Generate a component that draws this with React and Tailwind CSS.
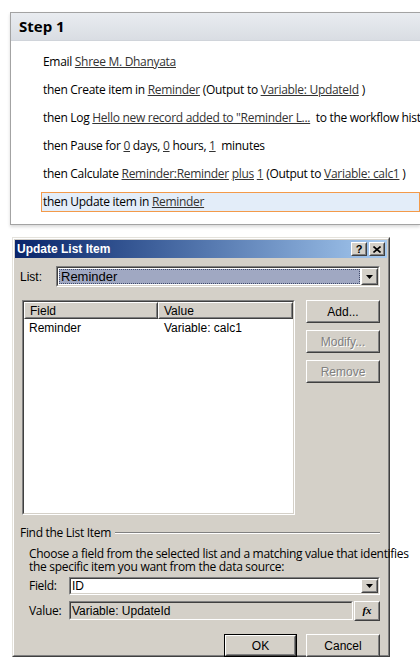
import React from "react";

const ui = { fontFamily: '"Open Sans", "Noto Sans", sans-serif' };
const classic = { fontFamily: '"Liberation Sans", Arial, sans-serif' };

function L({ children }) {
  return <span className="underline text-[#333]">{children}</span>;
}

function Row({ children, active }) {
  return (
    <div
      className={
        "h-[20px] ml-[30px] pl-[1px] flex items-center whitespace-nowrap border " +
        (active ? "border-[#f39a4a] bg-[#e3edf9]" : "border-transparent")
      }
    >
      {children}
    </div>
  );
}

function Raised({ children, className = "" }) {
  return (
    <div className={"border border-t-white border-l-white border-r-[#404040] border-b-[#404040] " + className}>
      <div className="h-full w-full border border-t-[#d4d0c8] border-l-[#d4d0c8] border-r-[#808080] border-b-[#808080] bg-[#d4d0c8] flex items-center justify-center">
        {children}
      </div>
    </div>
  );
}

function Sunken({ children, className = "", inner = "bg-white" }) {
  return (
    <div className={"border border-t-[#808080] border-l-[#808080] border-r-white border-b-white " + className}>
      <div className={"h-full w-full border border-t-[#404040] border-l-[#404040] border-r-[#d4d0c8] border-b-[#d4d0c8] flex " + inner}>
        {children}
      </div>
    </div>
  );
}

function Arrow() {
  return (
    <svg width="7" height="4" viewBox="0 0 7 4">
      <path d="M0 0h7L3.5 4z" fill="#000" />
    </svg>
  );
}

function DropButton() {
  return (
    <Raised className="w-[17px] h-full shrink-0">
      <Arrow />
    </Raised>
  );
}

function Btn({ children, disabled, size = "h-[23px] w-[74px]" }) {
  return (
    <Raised className={size}>
      <span
        className={"text-[12px] " + (disabled ? "text-[#808080] [text-shadow:1px_1px_0_#fff]" : "text-black")}
        style={classic}
      >
        {children}
      </span>
    </Raised>
  );
}

export default function App() {
  return (
    <div className="w-[420px] h-[663px] bg-white overflow-hidden text-black">
      {/* workflow step panel */}
      <div className="pt-[12px] pl-[10px]">
        <div className="h-[213px] border border-r-0 border-[#a3a3a3] shadow-[0_2px_3px_rgba(0,0,0,0.15)] text-[12px] tracking-[-0.3px] overflow-hidden" style={ui}>
          <div className="h-[28px] bg-gradient-to-b from-[#e9ecf0] to-[#d9dde3] flex items-center pl-[8px] font-bold text-[15px] tracking-normal border-b border-[#d0d4da]">
            Step 1
          </div>
          <div className="pt-[11px] flex flex-col gap-[8px]">
            <Row>
              Email&nbsp;<L>Shree M. Dhanyata</L>
            </Row>
            <Row>
              then Create item in&nbsp;<L>Reminder</L>&nbsp;(Output to&nbsp;<L>Variable: UpdateId</L>&nbsp;)
            </Row>
            <Row>
              then Log&nbsp;<L>Hello new record added to "Reminder L...</L>&nbsp; to the workflow history list
            </Row>
            <Row>
              then Pause for&nbsp;<L>0</L>&nbsp;days,&nbsp;<L>0</L>&nbsp;hours,&nbsp;<L>1</L>&nbsp; minutes
            </Row>
            <Row>
              then Calculate&nbsp;<L>Reminder:Reminder</L>&nbsp;<L>plus</L>&nbsp;<L>1</L>&nbsp;(Output to&nbsp;<L>Variable: calc1</L>&nbsp;)
            </Row>
            <Row active>
              then Update item in&nbsp;<L>Reminder</L>
            </Row>
          </div>
        </div>
      </div>

      {/* Update List Item dialog */}
      <div className="mt-[12px] ml-[12px] w-[378px] h-[420px] border border-t-[#e4e2dc] border-l-[#e4e2dc] border-r-[#404040] border-b-[#404040]" style={classic}>
        <div className="h-full border border-t-white border-l-white border-r-[#808080] border-b-[#808080] bg-[#d4d0c8] p-[1px] flex flex-col">
          <div className="h-[18px] shrink-0 bg-gradient-to-r from-[#0a246a] to-[#a6caf0] flex items-center pl-[2px] pr-[2px]">
            <span className="text-white font-bold text-[12px] flex-1">Update List Item</span>
            <Raised className="w-[16px] h-[14px]">
              <span className="font-bold text-[11px] leading-none">?</span>
            </Raised>
            <Raised className="w-[16px] h-[14px] ml-[2px]">
              <svg width="8" height="7" viewBox="0 0 8 7">
                <path d="M0.5 0.5L7.5 6.5M7.5 0.5L0.5 6.5" stroke="#000" strokeWidth="1.6" />
              </svg>
            </Raised>
          </div>

          <div className="pl-[5px] pr-[7px] flex flex-col text-[12px]">
            {/* List selector */}
            <div className="flex items-center mt-[8px] h-[21px]">
              <span className="w-[36px]">List:</span>
              <Sunken className="flex-1 h-[21px]" inner="bg-white">
                <div className="flex-1 m-[1px] bg-[#a0a8c2] border border-dotted border-[#404a6a] flex items-center pl-[1px] text-[13px]">
                  Reminder
                </div>
                <DropButton />
              </Sunken>
            </div>

            {/* Fields to update */}
            <div className="flex mt-[13px] gap-[11px]">
              <Sunken className="w-[273px] h-[215px] ml-[2px]">
                <div className="flex flex-col w-full">
                  <div className="flex h-[17px]">
                    <Raised className="w-[134px] h-[17px]">
                      <span className="w-full pl-[4px] text-[12px]">Field</span>
                    </Raised>
                    <Raised className="flex-1 h-[17px]">
                      <span className="w-full pl-[4px] text-[12px]">Value</span>
                    </Raised>
                  </div>
                  <div className="flex h-[18px] items-center text-[12px]">
                    <span className="w-[134px] pl-[5px]">Reminder</span>
                    <span className="pl-[6px]">Variable: calc1</span>
                  </div>
                </div>
              </Sunken>
              <div className="flex flex-col gap-[7px]">
                <Btn>Add...</Btn>
                <Btn disabled>Modify...</Btn>
                <Btn disabled>Remove</Btn>
              </div>
            </div>

            {/* Find the List Item */}
            <div className="flex items-center mt-[11px] h-[14px] tracking-[-0.3px]" style={ui}>
              <span className="whitespace-nowrap">Find the List Item</span>
              <div className="flex-1 ml-[4px] border-t border-t-[#808080] border-b border-b-white" />
            </div>
            <div className="pl-[9px] mt-[7px] text-[12px] tracking-[-0.3px] whitespace-nowrap flex flex-col" style={ui}>
              <span className="h-[13px] leading-[13px]">Choose a field from the selected list and a matching value that identifies</span>
              <span className="h-[13px] leading-[13px]">the specific item you want from the data source:</span>
            </div>

            <div className="pl-[9px] flex items-center mt-[4px] h-[18px]">
              <span className="w-[40px] tracking-[-0.3px]" style={ui}>Field:</span>
              <Sunken className="flex-1 h-[18px]">
                <div className="flex-1 flex items-center pl-[1px] text-[12px]">ID</div>
                <DropButton />
              </Sunken>
            </div>
            <div className="pl-[9px] flex items-center mt-[6px] h-[19px]">
              <span className="w-[40px] tracking-[-0.3px]" style={ui}>Value:</span>
              <Sunken className="flex-1 h-[19px]" inner="bg-[#d4d0c8]">
                <div className="flex-1 flex items-center pl-[1px] text-[12px]">Variable: UpdateId</div>
              </Sunken>
              <Raised className="w-[26px] h-[20px] ml-[1px]">
                <span className="italic text-[11px] font-bold" style={{ fontFamily: '"Liberation Serif", serif' }}>
                  fx
                </span>
              </Raised>
            </div>

            {/* Dialog buttons */}
            <div className="flex justify-end items-start gap-[9px] mt-[14px]">
              <div className="border border-black">
                <Btn size="h-[21px] w-[71px]">OK</Btn>
              </div>
              <Btn>Cancel</Btn>
            </div>
          </div>
        </div>
      </div>
    </div>
  );
}
